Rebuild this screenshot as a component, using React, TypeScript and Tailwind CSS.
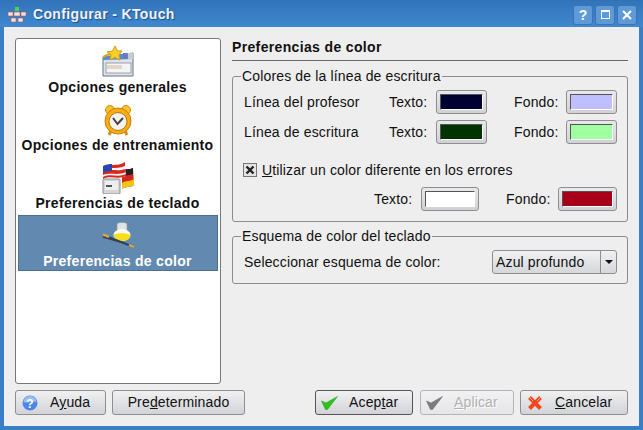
import React from "react"

const btn = "flex items-center rounded-[3px] border border-[#8e8e90] bg-gradient-to-b from-[#f1f1f3] to-[#d2d3d7] text-[14px] text-[#111]"

const SettingsIcon = () => (
    <svg width="32" height="32" viewBox="0 0 32 32">
        <path d="M1 11 L31 7 L31 30 L1 30 Z" fill="#dfe3ea" stroke="#6d7480" />
        <path d="M1 11 L31 7 L31 13 L1 14 Z" fill="#4f8fd8" />
        <rect x="21" y="7" width="4" height="6" fill="#6c78c0" />
        <rect x="26" y="7" width="5" height="6" fill="#c9ccd2" />
        <rect x="4" y="17" width="25" height="10" fill="#f5f5f5" stroke="#9aa0a8" />
        <rect x="5" y="19" width="15" height="4" fill="#e0d6cc" />
        <path d="M1 11 L12 6" stroke="#d9a520" strokeWidth="2" />
        <path d="M13 0 L15.5 5 L20 5 L17 9 L18 14 L13 11.5 L8 14 L9 9 L5 6 L10.5 5 Z" fill="#f6cf2b" stroke="#d69a13" />
    </svg>
)

const ClockIcon = () => (
    <svg width="32" height="32" viewBox="0 0 32 32">
        <circle cx="8" cy="6" r="4.5" fill="#fcc22f" stroke="#d98a0a" />
        <circle cx="24" cy="6" r="4.5" fill="#fcc22f" stroke="#d98a0a" />
        <path d="M9 27 L7 31 M23 27 L25 31" stroke="#e08a0a" strokeWidth="3" />
        <circle cx="16" cy="17" r="13" fill="#f8ae12" stroke="#cf7c07" />
        <circle cx="16" cy="17.5" r="9" fill="#f4f2ec" stroke="#b9790f" />
        <path d="M11 14 L15.5 20 L21 14" fill="none" stroke="#444" strokeWidth="2" />
    </svg>
)

const KeyboardFlagsIcon = () => (
    <svg width="32" height="32" viewBox="0 0 32 32">
        <path d="M20 9 C24 6 27 8 31 6 L32 23 C28 26 24 24 20 27 Z" fill="#d8231c" />
        <path d="M20 9 C24 6 27 8 31 6 L31 12 C27 14 24 12 20 15 Z" fill="#222" />
        <path d="M20 21 C24 18 28 20 32 17 L32 23 C28 26 24 24 20 27 Z" fill="#f2c414" />
        <path d="M1 4 C9 0 15 4 23 0 L24 14 C16 18 9 13 1 17 Z" fill="#f6f6f6" />
        <path d="M1 10 C9 6 15 10 23.5 7 L24 10 C16 14 9 10 1 13 Z M9 3 C14 3 18 3 23 0 L23 4 C18 6 14 6 9 6 Z M1 15 C9 11 16 16 24 12 L24 14 C16 18 9 13 1 17 Z" fill="#d8281f" />
        <path d="M1 4 C4 2.5 7 2 10 2 L10 9 C7 9 4 9.5 1 11 Z" fill="#2b45a8" />
        <rect x="1" y="17" width="17" height="15" rx="1" fill="#d5d6d8" stroke="#8b8d92" />
        <rect x="3" y="19" width="13" height="9" fill="#eeeeef" />
        <rect x="4" y="23" width="6" height="2" fill="#555" />
    </svg>
)

const InkIcon = () => (
    <svg width="32" height="28" viewBox="0 0 32 28">
        <path d="M15 2 C15 0 25 0 25 2 L25 8 C25 10 15 10 15 8 Z" fill="#dfe3e6" stroke="#8d979f" strokeWidth="0.7" />
        <ellipse cx="20" cy="13" rx="8.5" ry="6" fill="#fcfcee" />
        <path d="M11.5 13 C15 10.5 25 10.5 28.5 13 C28 17 25 19 20 19 C15 19 12 17 11.5 13 Z" fill="#f8dc1e" />
        <path d="M1 13 L32 25" stroke="#25407e" strokeWidth="2" />
        <path d="M1 15 L22 21" stroke="#3a3f4a" strokeWidth="1.5" />
        <path d="M1 12.5 L7 15 M27 23 L32 25" stroke="#e8b02a" strokeWidth="2" />
    </svg>
)

const HelpIcon = () => (
    <svg width="16" height="16" viewBox="0 0 16 16">
        <circle cx="8" cy="8" r="7.5" fill="#4d86ea" />
        <path d="M1.5 7 A6.5 6 0 0 1 14.5 7 C10 5 6 9 1.5 7 Z" fill="#9dbdf5" />
        <text x="8" y="12.5" textAnchor="middle" fontSize="12" fontWeight="700" fill="#fff" fontFamily="Liberation Sans">?</text>
    </svg>
)

const CheckIcon = ({ disabled }: { disabled?: boolean }) => (
    <svg width="18" height="14" viewBox="0 0 18 14">
        <path d="M0.5 5 L5 7 L16.5 0.5 L6.5 13.5 L4.5 13.5 Z" fill={disabled ? "#7c7c7c" : "#2fc11f"} stroke={disabled ? "#666" : "#1c9a18"} strokeWidth="0.5" />
    </svg>
)

const CancelIcon = () => (
    <svg width="16" height="16" viewBox="0 0 16 16">
        <path d="M2.5 2.5 L13.5 13.5 M13.5 2.5 L2.5 13.5" stroke="#f0481c" strokeWidth="4" />
        <path d="M2.5 2.5 L6 6 M13.5 2.5 L10 6" stroke="#ffb09a" strokeWidth="1" />
    </svg>
)

const AppIcon = () => (
    <svg width="20" height="18" viewBox="0 0 20 18">
        <rect x="8" y="1" width="4" height="4" fill="#4fd04f" />
        <rect x="1" y="6" width="5" height="4" fill="#efe3e3" stroke="#a65c5c" strokeWidth="0.6" />
        <rect x="7" y="6" width="6" height="4" fill="#efe3e3" stroke="#a65c5c" strokeWidth="0.6" />
        <rect x="14" y="6" width="5" height="4" fill="#efe3e3" stroke="#a65c5c" strokeWidth="0.6" />
        <rect x="4" y="12" width="5" height="4" fill="#efe3e3" stroke="#a65c5c" strokeWidth="0.6" />
        <rect x="11" y="12" width="5" height="4" fill="#efe3e3" stroke="#a65c5c" strokeWidth="0.6" />
    </svg>
)

const TitleButton = ({ children }: { children: React.ReactNode }) => (
    <div className="flex h-5 w-5 items-center justify-center rounded-[3px] border border-[#3a74b4] bg-[#5f9ad8] text-white">
        {children}
    </div>
)

const Swatch = ({ color, w = "w-[51px]" }: { color: string, w?: string }) => (
    <div className={`h-6 ${w} flex items-center justify-center rounded-[3px] border border-[#8e8e90] bg-gradient-to-b from-[#e9e9eb] to-[#d0d1d5] p-[3px]`}>
        <div className="h-full w-full border border-t-[#555] border-l-[#555] border-r-[#fff] border-b-[#fff]" style={{ backgroundColor: color }} />
    </div>
)

const items = [
    { label: "Opciones generales", icon: <SettingsIcon /> },
    { label: "Opciones de entrenamiento", icon: <ClockIcon /> },
    { label: "Preferencias de teclado", icon: <KeyboardFlagsIcon /> },
]

const App: React.FC = () => {

    return (

        <div className="flex h-[430px] w-[643px] flex-col overflow-hidden bg-[#3a7fc6] font-['Liberation_Sans',sans-serif] text-[14px] tracking-[0.15px] text-[#111]">

            <div className="flex h-[27px] shrink-0 items-center bg-gradient-to-b from-[#3273b8] to-[#4088d0] pl-[7px] pr-[6px] pt-[2px]">

                <AppIcon />

                <div className="ml-[6px] flex-1 text-[14px] font-bold tracking-[0.35px] text-[#eef3fa] [text-shadow:1px_1px_1px_#1f4f85]">Configurar - KTouch</div>

                <div className="flex gap-[2px]">

                    <TitleButton><span className="text-[14px] font-bold leading-none">?</span></TitleButton>

                    <TitleButton><div className="h-[9px] w-[9px] border border-t-2 border-white" /></TitleButton>

                    <TitleButton>
                        <svg width="10" height="10" viewBox="0 0 10 10"><path d="M1 1 L9 9 M9 1 L1 9" stroke="#fff" strokeWidth="2" /></svg>
                    </TitleButton>

                </div>

            </div>

            <div className="mx-[4px] mb-[4px] flex min-h-0 flex-1 flex-col bg-[#eeeeee] px-[11px] pt-[11px]">

                <div className="flex h-[346px] gap-[11px]">

                    <div className="flex h-full w-[206px] shrink-0 flex-col gap-[2px] rounded-[3px] border border-[#77777a] bg-white p-[2px]">

                        {items.map((item) => (

                            <div key={item.label} className="flex h-[56px] flex-col items-center justify-end pr-[1px]">

                                <div className="flex h-[32px] items-center justify-center">{item.icon}</div>

                                <div className="mb-[1px] h-[18px] text-[14px] font-bold leading-[18px] tracking-[0.3px] text-[#111] whitespace-nowrap">{item.label}</div>

                            </div>

                        ))}

                        <div className="flex h-[56px] flex-col items-center justify-end border border-[#4d6f91] bg-[#6289b0] pr-[1px]">

                            <div className="flex h-[28px] items-center justify-center"><InkIcon /></div>

                            <div className="mt-[2px] h-[18px] text-[14px] font-bold leading-[18px] tracking-[0.3px] text-white">Preferencias de color</div>

                        </div>

                    </div>

                    <div className="flex min-w-0 flex-1 flex-col">

                        <div className="flex h-[23px] items-center border-b border-[#666] pb-[4px] text-[14px] font-bold tracking-[0.35px]">Preferencias de color</div>

                        <fieldset className="mt-[7px] h-[154px] rounded-[3px] border border-[#8c8c8e] pl-[11px] pr-[10px]">

                            <legend className="-ml-[3px] px-[1px] leading-[16px]">Colores de la línea de escritura</legend>

                            <div className="mt-[6px] flex h-6 items-center">
                                <div className="w-[145px]">Línea del profesor</div>
                                <div className="w-[47px]">Texto:</div>
                                <Swatch color="#000033" />
                                <div className="ml-[27px] w-[52px]">Fondo:</div>
                                <Swatch color="#bfbfff" />
                            </div>

                            <div className="mt-[6px] flex h-6 items-center">
                                <div className="w-[145px]">Línea de escritura</div>
                                <div className="w-[47px]">Texto:</div>
                                <Swatch color="#003300" />
                                <div className="ml-[27px] w-[52px]">Fondo:</div>
                                <Swatch color="#a0ffa0" />
                            </div>

                            <div className="mt-[17px] flex h-[18px] items-center">
                                <div className="-ml-[1px] flex h-[14px] w-[14px] items-center justify-center border border-[#777] bg-[#e4e4e6]">
                                    <svg width="10" height="10" viewBox="0 0 10 10"><path d="M1.5 1.5 L8.5 8.5 M8.5 1.5 L1.5 8.5" stroke="#222" strokeWidth="2.4" /></svg>
                                </div>
                                <div className="ml-[5px]"><span className="underline">U</span>tilizar un color diferente en los errores</div>
                            </div>

                            <div className="mt-[8px] flex h-6 items-center">
                                <div className="ml-[130px] w-[47px]">Texto:</div>
                                <Swatch color="#ffffff" w="w-[58px]" />
                                <div className="ml-[27px] w-[52px]">Fondo:</div>
                                <Swatch color="#a80018" w="w-[59px]" />
                            </div>

                        </fieldset>

                        <fieldset className="mt-[6px] h-[56px] rounded-[3px] border border-[#8c8c8e] pl-[11px] pr-[10px]">

                            <legend className="-ml-[3px] px-[1px] leading-[16px]">Esquema de color del teclado</legend>

                            <div className="mt-[6px] flex h-6 items-center justify-between">

                                <div>Seleccionar esquema de color:</div>

                                <div className="flex h-6 w-[125px] items-center rounded-[3px] border border-[#8e8e90] bg-gradient-to-b from-[#f1f1f3] to-[#d6d7da]">
                                    <div className="flex-1 pl-[3px]">Azul profundo</div>
                                    <div className="flex h-full w-[16px] items-center justify-center border-l border-[#8e8e90]">
                                        <div className="h-0 w-0 border-x-[4px] border-t-[4px] border-x-transparent border-t-[#111]" />
                                    </div>
                                </div>

                            </div>

                        </fieldset>

                    </div>

                </div>

                <div className="mt-[6px] flex h-[25px]">

                    <div className={`${btn} w-[91px] pl-[6px]`}>
                        <HelpIcon />
                        <div className="ml-[12px]">A<span className="underline">y</span>uda</div>
                    </div>

                    <div className={`${btn} ml-[6px] w-[133px] justify-center`}>
                        <div>Pre<span className="underline">d</span>eterminado</div>
                    </div>

                    <div className={`${btn} ml-[70px] w-[98px] border-[#555] pl-[5px]`}>
                        <CheckIcon />
                        <div className="ml-[10px]">Acep<span className="underline">t</span>ar</div>
                    </div>

                    <div className={`${btn} ml-[7px] w-[94px] border-[#b5b5b7] from-[#efefef] to-[#e6e6e8] pl-[5px] text-[#b0b0b0] [text-shadow:1px_1px_0_#fff]`}>
                        <CheckIcon disabled />
                        <div className="ml-[10px]"><span className="underline">A</span>plicar</div>
                    </div>

                    <div className={`${btn} ml-[6px] w-[108px] pl-[6px]`}>
                        <CancelIcon />
                        <div className="ml-[12px]"><span className="underline">C</span>ancelar</div>
                    </div>

                </div>

            </div>

        </div>

    )

}

export default App
